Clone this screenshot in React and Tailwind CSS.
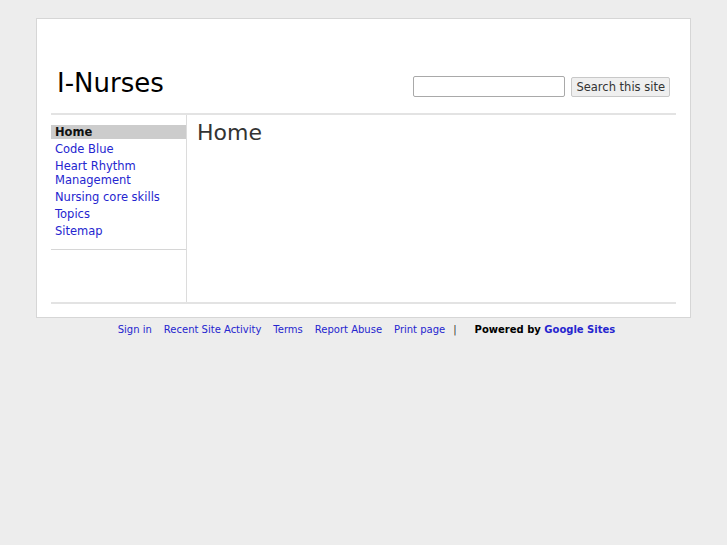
import React from "react";

const navItems = [
  { label: "Home", active: true },
  { label: "Code Blue" },
  { label: "Heart Rhythm Management" },
  { label: "Nursing core skills" },
  { label: "Topics" },
  { label: "Sitemap" },
];

const footerLinks = ["Sign in", "Recent Site Activity", "Terms", "Report Abuse", "Print page"];

export default function App() {
  return (
    <div
      className="min-h-screen bg-[#ededed] pt-[18px]"
      style={{ fontFamily: '"DejaVu Sans", Verdana, sans-serif' }}
    >
      {/* Site box */}
      <div className="ml-[36px] w-[655px] bg-white border border-[#d6d6d6] px-[14px] pb-[13px]">
        {/* Header */}
        <div className="flex items-end justify-between h-[96px] pb-[14px] border-b-2 border-[#e3e3e3]">
          <h1 className="pl-[6px] text-[26px] leading-[32px] text-black">I-Nurses</h1>
          <div className="flex items-center gap-[6px] pr-[6px] pb-[2px]">
            <input
              type="text"
              className="w-[152px] h-[21px] border border-[#a9a9a9] rounded-[2px] bg-white outline-none px-1 text-[12px]"
            />
            <button className="h-[20px] px-[4px] text-[11.5px] leading-[18px] text-[#333] bg-[#efefef] border border-[#c8c8c8] rounded-[2px]">
              Search this site
            </button>
          </div>
        </div>

        {/* Body */}
        <div className="flex h-[189px] border-b-2 border-[#e3e3e3]">
          <div className="w-[136px] border-r border-[#dcdcdc] pt-[8px]">
            <ul className="border-b border-[#d6d6d6] pb-[10px]">
              {navItems.map((item) => (
                <li key={item.label} className="py-[1.5px]">
                  {item.active ? (
                    <div className="bg-[#cccccc] pl-[4px] text-[11.5px] leading-[14px] font-bold text-[#111]">
                      {item.label}
                    </div>
                  ) : (
                    <a
                      href="#"
                      className="block pl-[4px] pr-[20px] text-[11.5px] leading-[14px] text-[#2525cf]"
                    >
                      {item.label}
                    </a>
                  )}
                </li>
              ))}
            </ul>
          </div>
          <div className="flex-1 pl-[10px] pt-[4px]">
            <h2 className="text-[22px] leading-[28px] text-[#333]">Home</h2>
          </div>
        </div>
      </div>

      {/* Footer */}
      <div className="ml-[36px] w-[655px] flex justify-center items-center pt-[5px] text-[10px] leading-[14px]">
        <div className="flex items-center gap-[12px] pl-[6px]">
          {footerLinks.map((l) => (
            <a key={l} href="#" className="text-[#2525cf]">
              {l}
            </a>
          ))}
          <span className="text-[#333] -ml-[4px]">|</span>
          <span className="ml-[6px] font-bold text-black">
            Powered by <a href="#" className="text-[#2525cf]">Google Sites</a>
          </span>
        </div>
      </div>
    </div>
  );
}
